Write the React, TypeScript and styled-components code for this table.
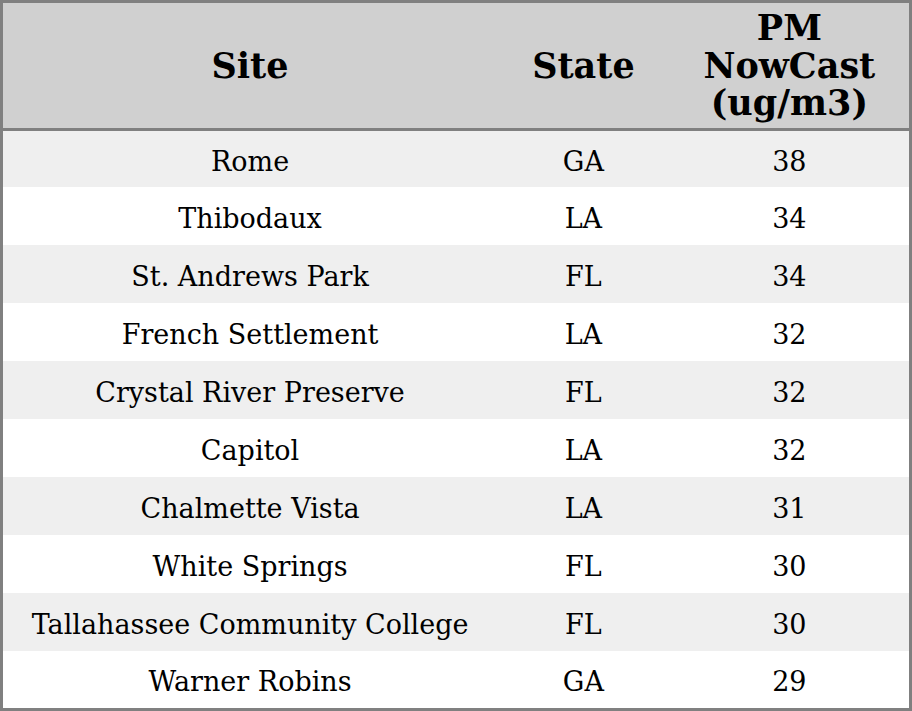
import React from "react";
import styled, { createGlobalStyle } from "styled-components";

const Global = createGlobalStyle`
  html, body { margin: 0; padding: 0; background: #ffffff; }
  #root { width: 912px; height: 711px; }
`;

const Table = styled.table`
  width: 912px;
  border-collapse: collapse;
  table-layout: fixed;
  border: 3px solid #808080;
  font-family: "DejaVu Serif", serif;
  color: #000;
`;

const Col = styled.col<{ $w: number }>`
  width: ${(p) => p.$w}px;
`;

const HeadRow = styled.tr`
  background: #d0d0d0;
  height: 128px;
  border-bottom: 3px solid #808080;
`;

const Th = styled.th`
  font-size: 35px;
  font-weight: bold;
  line-height: 37.5px;
  text-align: center;
  padding: 0;
`;

const Row = styled.tr<{ $alt: boolean }>`
  background: ${(p) => (p.$alt ? "#efefef" : "#ffffff")};
  height: 58px;
  &:first-child { height: 57.5px; }
  &:last-child { height: 58.5px; }
`;

const Td = styled.td`
  font-size: 27px;
  text-align: center;
  padding: 4px 0 0 0;
`;

const data: [string, string, number][] = [
  ["Rome", "GA", 38],
  ["Thibodaux", "LA", 34],
  ["St. Andrews Park", "FL", 34],
  ["French Settlement", "LA", 32],
  ["Crystal River Preserve", "FL", 32],
  ["Capitol", "LA", 32],
  ["Chalmette Vista", "LA", 31],
  ["White Springs", "FL", 30],
  ["Tallahassee Community College", "FL", 30],
  ["Warner Robins", "GA", 29],
];

export default function App() {
  return (
    <>
      <Global />
      <Table>
        <colgroup>
          <Col $w={494} />
          <Col $w={172} />
          <Col $w={240} />
        </colgroup>
        <thead>
          <HeadRow>
            <Th>Site</Th>
            <Th>State</Th>
            <Th>
              PM
              <br />
              NowCast
              <br />
              (ug/m3)
            </Th>
          </HeadRow>
        </thead>
        <tbody>
          {data.map(([site, st, v], i) => (
            <Row key={site} $alt={i % 2 === 0}>
              <Td>{site}</Td>
              <Td>{st}</Td>
              <Td>{v}</Td>
            </Row>
          ))}
        </tbody>
      </Table>
    </>
  );
}
